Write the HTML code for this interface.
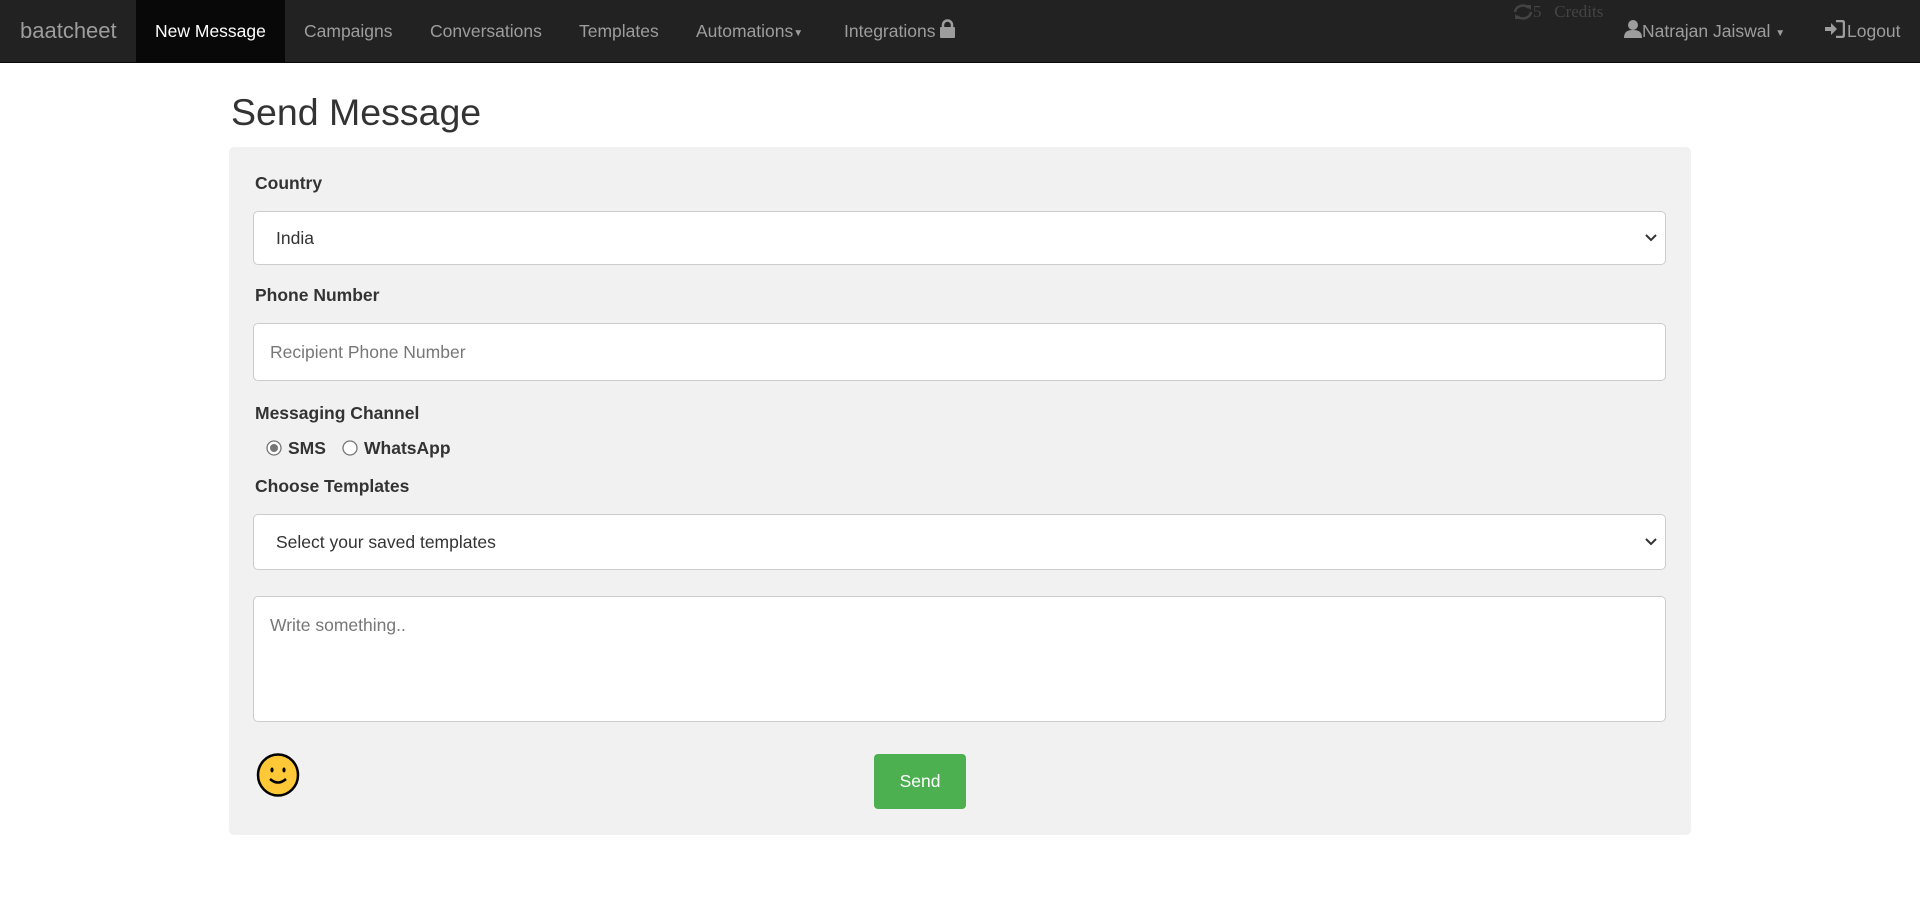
<!DOCTYPE html>
<html><head><meta charset="utf-8"><style>
*{box-sizing:border-box;margin:0;padding:0}
body{width:1920px;height:901px;background:#fff;font-family:"Liberation Sans",Arial,sans-serif;position:relative;overflow:hidden;color:#333}
.nav{position:absolute;left:0;top:0;width:1920px;height:63px;background:#222;border-bottom:1px solid #080808}
.nav span{position:absolute;top:0;line-height:62px;font-size:17.5px;color:#9d9d9d;white-space:nowrap}
.abs{position:absolute}
.lbl{position:absolute;left:255px;font-weight:bold;font-size:17.5px;color:#333}
.box{position:absolute;left:253px;width:1413px;background:#fff;border:1px solid #ccc;border-radius:5px;font-size:17.5px}
</style></head><body>
<div class="nav">
 <span style="left:20px;font-size:22px">baatcheet</span>
 <div class="abs" style="left:136px;top:0;width:149px;height:62px;background:#080808"></div>
 <span style="left:155px;color:#fff">New Message</span>
 <span style="left:304px">Campaigns</span>
 <span style="left:430px">Conversations</span>
 <span style="left:579px">Templates</span>
 <span style="left:696px">Automations<span style="position:static;font-size:10px;vertical-align:1px">▼</span></span>
 <span style="left:844px">Integrations</span>
 <svg class="abs" style="left:939px;top:19px" width="17" height="19" viewBox="0 0 17 19"><path d="M4 9V6a4.5 4.5 0 0 1 9 0v3" fill="none" stroke="#9d9d9d" stroke-width="2.5"/><rect x="1" y="8" width="15" height="11" rx="1" fill="#9d9d9d"/></svg>
 <svg class="abs" style="left:1512px;top:3px" width="22" height="18" viewBox="0 0 22 18"><path d="M3 9a8 7 0 0 1 14-4M19 9a8 7 0 0 1-14 4" fill="none" stroke="#444" stroke-width="2.5"/><path d="M14 2l5 0 0 5zM8 16l-5 0 0-5z" fill="#444"/></svg>
 <div class="abs" style="left:1533px;top:2px;font-family:'Liberation Serif',serif;font-size:17px;color:#444">5 &nbsp;&nbsp;Credits</div>
 <svg class="abs" style="left:1624px;top:19px" width="18" height="19" viewBox="0 0 18 19"><circle cx="9" cy="6" r="5" fill="#9d9d9d"/><path d="M0 19c0-6 3-8 9-8s9 2 9 8z" fill="#9d9d9d"/></svg>
 <span style="left:1642px">Natrajan Jaiswal <span style="position:static;font-size:10px;vertical-align:1px">▼</span></span>
 <svg class="abs" style="left:1825px;top:20px" width="20" height="18" viewBox="0 0 20 18"><path d="M0 7h6V3l6 6-6 6v-4H0z" fill="#9d9d9d"/><path d="M11 1h6a2 2 0 0 1 2 2v12a2 2 0 0 1-2 2h-6" fill="none" stroke="#9d9d9d" stroke-width="2.5"/></svg>
 <span style="left:1847px">Logout</span>
</div>
<div class="abs" style="left:231px;top:91px;font-size:37.5px;color:#333">Send Message</div>
<div class="abs" style="left:229px;top:147px;width:1462px;height:688px;background:#f1f1f1;border-radius:5px"></div>
<div class="lbl" style="top:173px">Country</div>
<div class="box" style="top:211px;height:54px"><span class="abs" style="left:22px;top:16px;color:#333">India</span>
<svg class="abs" style="right:8px;top:22px" width="12" height="8" viewBox="0 0 12 8"><path d="M1 1l5 5 5-5" fill="none" stroke="#333" stroke-width="2"/></svg></div>
<div class="lbl" style="top:285px">Phone Number</div>
<div class="box" style="top:323px;height:58px"><span class="abs" style="left:16px;top:18px;color:#777">Recipient Phone Number</span></div>
<div class="lbl" style="top:403px">Messaging Channel</div>
<svg class="abs" style="left:266px;top:440px" width="16" height="16"><circle cx="8" cy="8" r="7" fill="#fff" stroke="#767676" stroke-width="1.3"/><circle cx="8" cy="8" r="4" fill="#767676"/></svg>
<div class="lbl" style="left:288px;top:438px">SMS</div>
<svg class="abs" style="left:342px;top:440px" width="16" height="16"><circle cx="8" cy="8" r="7" fill="#fff" stroke="#767676" stroke-width="1.3"/></svg>
<div class="lbl" style="left:364px;top:438px">WhatsApp</div>
<div class="lbl" style="top:476px">Choose Templates</div>
<div class="box" style="top:514px;height:56px"><span class="abs" style="left:22px;top:17px;color:#333">Select your saved templates</span>
<svg class="abs" style="right:8px;top:23px" width="12" height="8" viewBox="0 0 12 8"><path d="M1 1l5 5 5-5" fill="none" stroke="#333" stroke-width="2"/></svg></div>
<div class="box" style="top:596px;height:126px"><span class="abs" style="left:16px;top:18px;color:#777">Write something..</span></div>
<svg class="abs" style="left:256px;top:753px" width="44" height="44" viewBox="0 0 44 44"><ellipse cx="22" cy="22" rx="20" ry="20.5" fill="#fec836" stroke="#000" stroke-width="2.5"/><ellipse cx="16" cy="17" rx="1.6" ry="2.5"/><ellipse cx="28" cy="17" rx="1.6" ry="2.5"/><path d="M14 26q8 7 16 0" fill="none" stroke="#000" stroke-width="2.5"/></svg>
<div class="abs" style="left:874px;top:754px;width:92px;height:55px;background:#4cb050;border-radius:4px;color:#fff;font-size:17.5px;text-align:center;line-height:55px">Send</div>
</body></html>
